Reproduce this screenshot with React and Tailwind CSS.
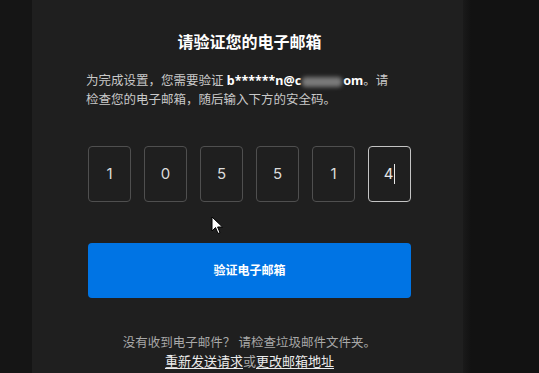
import React from "react";

const digits = ["1", "0", "5", "5", "1", "4"];

export default function App() {
  return (
    <div
      className="relative flex h-[373px] w-[539px] overflow-hidden bg-[#131313]"
      style={{ fontFamily: '"Noto Sans", "Noto Sans CJK SC", sans-serif' }}
    >
      <div className="w-[32px] shrink-0 bg-[#151515]" />
      <div className="flex w-[431px] shrink-0 flex-col bg-[#1f1f1f] pl-[56px] pr-[52px]">
        <h1 className="mt-[31px] text-center text-[16px] font-bold leading-[22px] text-white">
          请验证您的电子邮箱
        </h1>
        <p className="mt-[18px] -ml-[2px] pr-[14px] text-[12.5px] leading-[19px] text-[#c8c8c8]">
          为完成设置，您需要验证{" "}
          <span className="font-bold text-white">
            b******n@c
            <span className="mx-[1px] inline-block h-[10px] w-[40px] rounded-sm bg-[#7a7a7a] align-middle blur-[2px]" />
            om
          </span>
          。请检查您的电子邮箱，随后输入下方的安全码。
        </p>
        <div className="mt-[37px] flex justify-between">
          {digits.map((d, i) => (
            <div
              key={i}
              className={
                i === 5
                  ? "flex h-[56px] w-[43px] items-center justify-center rounded-[4px] border border-[#c4c4c4] text-[15px] text-[#e8e8e8]"
                  : "flex h-[56px] w-[43px] items-center justify-center rounded-[4px] border border-[#4f4f4f] text-[15px] text-[#dcdcdc]"
              }
              style={{ fontFamily: "Inter, sans-serif" }}
            >
              {d}
              {i === 5 && <span className="ml-[1px] inline-block h-[20px] w-[1px] bg-[#e8e8e8]" />}
            </div>
          ))}
        </div>
        <button className="mt-[41px] h-[55px] w-full rounded-[4px] bg-[#0074e4] text-[12px] font-bold text-white">
          验证电子邮箱
        </button>
        <p className="mt-[35px] text-center text-[12.5px] leading-[19px] text-[#a8a8a8]">
          没有收到电子邮件？ 请检查垃圾邮件文件夹。
        </p>
        <p className="text-center text-[13px] leading-[19px] text-[#a8a8a8]">
          <span className="text-[#ececec] underline underline-offset-2">重新发送请求</span>或
          <span className="text-[#ececec] underline underline-offset-2">更改邮箱地址</span>
        </p>
      </div>
      <div className="w-[8px] shrink-0 bg-gradient-to-r from-[#1a1a1a] to-[#121212]" />
      <div className="flex-1 bg-[#121212]" />
      <svg
        className="absolute left-[211px] top-[216px]"
        width="13"
        height="19"
        viewBox="0 0 13 19"
      >
        <path
          d="M1 1 L1 15 L4.5 11.5 L7 17.5 L9 16.6 L6.6 11 L11.5 11 Z"
          fill="#ffffff"
          stroke="#000000"
          strokeWidth="1"
          strokeLinejoin="round"
        />
      </svg>
    </div>
  );
}
